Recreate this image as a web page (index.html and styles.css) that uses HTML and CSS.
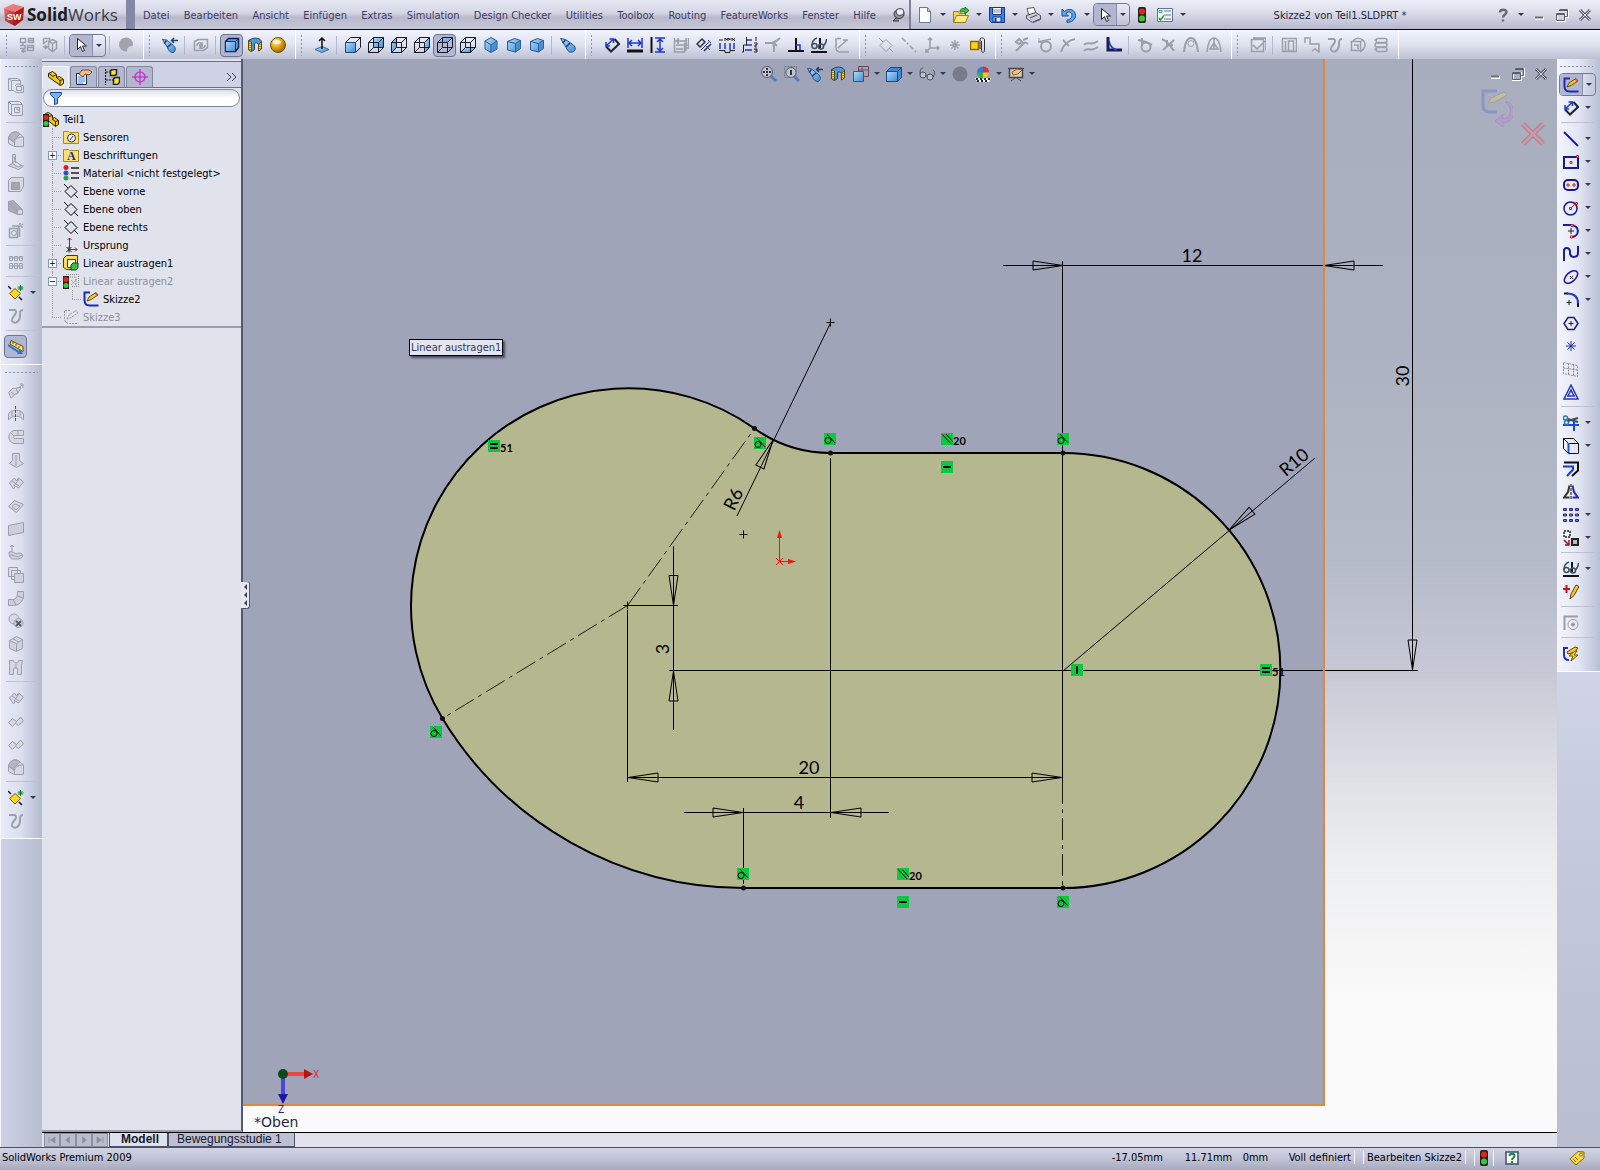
FILE: index.html
```html
<!DOCTYPE html>
<html lang="de">
<head>
  <meta charset="UTF-8" />
  <meta name="viewport" content="width=device-width, initial-scale=1.0"/>
  <title>SolidWorks - Skizze2 von Teil1.SLDPRT</title>
  <link rel="stylesheet" href="styles.css">
</head>
<body>
  <!-- icon symbols -->
  <svg class="sprite" aria-hidden="true">
    <defs>
      <linearGradient id="g-blue" x1="0" y1="0" x2="1" y2="1"><stop offset="0" stop-color="#b4dcfa"/><stop offset="1" stop-color="#3f8ad0"/></linearGradient>
      <linearGradient id="g-red" x1="0" y1="0" x2="1" y2="1"><stop offset="0" stop-color="#f07070"/><stop offset="1" stop-color="#a01018"/></linearGradient>
      <radialGradient id="g-gold" cx=".35" cy=".3" r=".8"><stop offset="0" stop-color="#fff6c0"/><stop offset=".4" stop-color="#e8b020"/><stop offset="1" stop-color="#8a5a00"/></radialGradient>
    </defs>

    <symbol id="boxes" viewBox="0 0 16 16"><path d="M1.500 1.500h5v4h-5zM9.500 1.500h5v4h-5zM8.500 8.500h6v5h-6zM1 8.500h5v3H1M3 14h4M5 12l-2 2 2 2M4 5v3M9 3.500h5M9 10.500h5" stroke-width="1.500"/></symbol>
    <symbol id="boxes2" viewBox="0 0 16 16"><path d="M1.500 1.500h6v4M6.500 4.500l4-2 4 2v7l-4 3-4-3zM6.500 4.500l4 2 4-2M10.500 6.500v8M1 10h4M3 8l2 2-2 2M1.500 1.500v5l4-3" stroke-width="1.500"/></symbol>
    <symbol id="cursor" viewBox="0 0 16 16"><path d="M4.500 1.500v11l3-3 2 5 2-1-2-4.500h4z" fill="#fff" stroke="#222"/></symbol>
    <symbol id="cloudball" viewBox="0 0 16 16"><circle cx="8" cy="7.500" r="7" fill="#a1a3ae" stroke="none"/><path d="M9 15c0-5 2-6 7-6l-2 4z" fill="#d4d6e0" stroke="none"/></symbol>
    <symbol id="brush" viewBox="0 0 16 16"><path d="M.5 1.500l5 1 8 5.500c3 3 2 6-1 7-3 1-5-1-6-4z" fill="url(#g-blue)" stroke="#24508a"/><path d="M5.500 3L2.500 6M10 6l-4 4" stroke="#1d3f70" stroke-width="1.500"/></symbol>
    <symbol id="brushback" viewBox="0 0 16 16"><path d="M.5 2.500l4 .5 7 5.500c3 3 2 6-.5 7-3 0-4.500-2-5.500-5z" fill="url(#g-blue)" stroke="#24508a"/><path d="M4.500 3.500L2 6.500M9 7l-4 3.500" stroke="#1d3f70" stroke-width="1.500"/><path d="M9.500 3.500H16M12 1L9.500 3.500 12 6" stroke="#1d3f80" stroke-width="1.500"/></symbol>
    <symbol id="rebuild" viewBox="0 0 16 16"><path d="M1.500 4.500l4-2h9v8l-4 3h-9zM4 9c0-4 5-4 5-1M12 8c0 4-5 4-5 1M9 5v3H6M7 12V9h3" stroke-width="1.500"/></symbol>
    <symbol id="shaded" viewBox="0 0 16 16"><path d="M1.500 4.500l3-3h10v9l-3 4h-10z" fill="#5aa5ea" stroke="#10204c" stroke-width="1.500"/><path d="M1.500 4.500h10v10h-10z" fill="url(#g-blue)" stroke="#153060"/><path d="M11.500 4.500l3-3" stroke="#153060"/></symbol>
    <symbol id="section" viewBox="0 0 16 16"><path d="M1.500 3.500l4-2c4-1 8 0 9 3v7l-3 2v-6c-1-2-3-2-4-1v6l-3 2-3-2z" fill="#4f96d8" stroke="#1d3c68"/><path d="M1.500 4v9l3 1.500V5zM11.500 7v7l3-2V5z" fill="#ffe030" stroke="#5b4a00"/><path d="M3 6v7M13 7v5" stroke="#333" stroke-dasharray="1 1"/></symbol>
    <symbol id="gold" viewBox="0 0 16 16"><circle cx="8" cy="8" r="7.500" fill="url(#g-gold)" stroke="#7a5200"/><ellipse cx="7" cy="5" rx="4" ry="2" fill="#fff" opacity=".7" stroke="none"/></symbol>
    <symbol id="normal" viewBox="0 0 16 16"><path d="M1 12.500l7-3 7 3-7 3z" fill="url(#g-blue)" stroke="#3a6ca0"/><path d="M8 12V1M5 4l3-3 3 3" stroke="#111" stroke-width="1.500"/></symbol>
    <symbol id="v-wire" viewBox="0 0 16 16"><path d="M.5 5.500h10v10H.5zM5.500.5h10v10h-10zM.5 5.500l5-5M10.500 5.500l5-5M.5 15.500l5-5M10.500 15.500l5-5" stroke="#1a1d28"/></symbol>
    <symbol id="v-front" viewBox="0 0 16 16"><path d="M.5 5.500l5-5h10v10l-5 5" stroke="#1a1d28"/><path d="M.5 5.500h10v10H.5z" fill="url(#g-blue)" stroke="#1d4880"/><path d="M10.500 5.500l5-5" stroke="#1a1d28"/></symbol>
    <symbol id="v-shade" viewBox="0 0 16 16"><path d="M.5 5.500l4-4h11v10l-4 4H.5z" fill="#3f8ad8" stroke="#1d4880"/><path d="M.5 5.500h11v10H.5z" fill="url(#g-blue)" stroke="#1d4880"/><path d="M11.500 5.500l4-4" stroke="#1d4880"/></symbol>
    <symbol id="v-back" viewBox="0 0 16 16"><path d="M5.500.5h10v10h-10z" fill="url(#g-blue)" stroke="none"/><use href="#v-wire"/></symbol>
    <symbol id="v-left" viewBox="0 0 16 16"><path d="M.5 5.500l5-5v10l-5 5z" fill="url(#g-blue)" stroke="none"/><use href="#v-wire"/></symbol>
    <symbol id="v-right" viewBox="0 0 16 16"><path d="M10.500 5.500l5-5v10l-5 5z" fill="url(#g-blue)" stroke="none"/><use href="#v-wire"/></symbol>
    <symbol id="v-top" viewBox="0 0 16 16"><path d="M.5 5.500l5-5h10l-5 5z" fill="url(#g-blue)" stroke="none"/><use href="#v-wire"/></symbol>
    <symbol id="v-bottom" viewBox="0 0 16 16"><path d="M.5 15.500l5-5h10l-5 5z" fill="url(#g-blue)" stroke="none"/><use href="#v-wire"/></symbol>
    <symbol id="iso" viewBox="0 0 16 16"><path d="M8 .5l6 3.500v8l-6 3.500L2 12V4z" fill="url(#g-blue)" stroke="#235a94"/><path d="M2 4l6 4 6-4M8 8v7" stroke="#235a94"/><path d="M8 8l6-4v8l-6 3.500z" fill="#3a80c8" stroke="none" opacity=".6"/></symbol>
    <symbol id="dimetric" viewBox="0 0 16 16"><path d="M1.500 4.500l7-3 6 2v8l-5 3.500-8-2z" fill="url(#g-blue)" stroke="#235a94"/><path d="M1.500 4.500l8 2 5-3M9.500 6.500V15" stroke="#235a94"/><path d="M9.500 6.500l5-3v8l-5 3z" fill="#3a80c8" stroke="none" opacity=".6"/></symbol>

    <symbol id="smartdim" viewBox="0 0 16 16"><path d="M2 9.500l5 5L15 7l-4.500-5" stroke="#1c2238" stroke-width="2"/><path d="M2 9L9 2.500M5.500 2h4v4M2 5v4h4" stroke="#2038d0" stroke-width="1.500"/></symbol>
    <symbol id="hdim" viewBox="0 0 16 16"><path d="M0 14h16" stroke="#111" stroke-width="3"/><path d="M1 1v10M15 1v10M2 6h12M5 3L2 6l3 3M11 3l3 3-3 3" stroke="#2038d0" stroke-width="1.500"/></symbol>
    <symbol id="vdim" viewBox="0 0 16 16"><path d="M1.500 0v16" stroke="#111" stroke-width="2"/><path d="M5 1h10M5 15h10M10 2v12M7 5l3-3 3 3M7 11l3 3 3-3" stroke="#2038d0" stroke-width="1.500"/></symbol>
    <symbol id="baseline" viewBox="0 0 16 16"><path d="M1.500 1v14h10v-4h4V1M3 4h11M3 8h11M5 1v6M13 1v13M3 12h7M6 2l-3 2 3 2M11 6l3 2-3 2" stroke-width="1.500"/></symbol>
    <symbol id="chamferdim" viewBox="0 0 16 16"><path d="M1 7l5-5 3 3-5 5zM8 14l7-7" stroke="#30333f" stroke-width="1.500"/><path d="M5 13l8-8M9 8l5 5M12 3l3 3" stroke="#2a3a90"/></symbol>
    <symbol id="hord" viewBox="0 0 16 16"><path d="M1 12V6M6 12V6M11 13V6M15 12V6" stroke="#2038d0" stroke-width="1.500"/><path d="M0 3h4M6 4V1l2 2V1M9 4V1l2 2V1M13 4V1l3 3V1M0 13.500h6v2h5v-2h5" stroke="#222"/></symbol>
    <symbol id="vord" viewBox="0 0 16 16"><path d="M4 3h6M4 8h6M3 13h7" stroke="#2038d0" stroke-width="1.500"/><path d="M4.500 0v8h-3v7H0M14 0v4M12 6h3v2h-2v2h2M12 12h3v3h-3M13 13h2" stroke="#222"/></symbol>
    <symbol id="scurve" viewBox="0 0 16 16"><path d="M0 6h7c2 0 2 3 2 9M7 6c3-1 6-3 8-5M12 9L9 6" stroke-width="2"/></symbol>
    <symbol id="perp" viewBox="0 0 16 16"><path d="M0 14h16M8 1v12" stroke="#111" stroke-width="2"/><path d="M8 8h4v5" stroke="#2038d0" stroke-width="1.500"/></symbol>
    <symbol id="relations" viewBox="0 0 16 16"><path d="M0 15h16M9 1v10" stroke="#111" stroke-width="2"/><circle cx="3.500" cy="9" r="2.500" stroke="#3c5260" stroke-width="1.500"/><circle cx="10" cy="9.500" r="2.500" stroke="#3c5260" stroke-width="1.500"/><path d="M1 9c0-4 2-7 5-8M12.500 9c2-2 3-4 3-7" stroke="#3c5260" stroke-width="1.500"/></symbol>
    <symbol id="angle" viewBox="0 0 16 16"><path d="M2 1v10c0 3 2 4 5 4h8M4 11l9-8M9 3h5M3 1.500h4" stroke-width="1.500"/></symbol>
    <symbol id="plane" viewBox="0 0 16 16"><path d="M8 2.500l6 6-6 6-6-6zM1 1l4 4M11 11l4 4"/></symbol>
    <symbol id="axis" viewBox="0 0 16 16"><path d="M1 1l14 14" stroke-width="1.500" stroke-dasharray="5 2 2 2"/></symbol>
    <symbol id="csys" viewBox="0 0 16 16"><path d="M6 1v10h9M6 11l-4 4M4 3l2-2 2 2M13 9l2 2-2 2M2 12v3h3" stroke-width="1.500"/></symbol>
    <symbol id="point" viewBox="0 0 16 16"><path d="M8 3v10M3 8h10M4.500 4.500l7 7M11.500 4.500l-7 7" stroke-width="1.500"/></symbol>
    <symbol id="clip" viewBox="0 0 16 16"><path d="M.5 4.500h8v8h-8z" fill="#ffd020" stroke="#8a6800" stroke-width="1.500"/><path d="M10 12V2.500c0-2 4.500-2 4.500 0v11c0 2.500-3 2.500-3 0V4" stroke="#333"/></symbol>
    <symbol id="wrench" viewBox="0 0 16 16"><path d="M2 14L11 5M11 5l3 2M9 3l5-2M2 5l3-3 3 3-3 2z" stroke-width="2"/></symbol>
    <symbol id="circtan" viewBox="0 0 16 16"><path d="M1 5L14 2" stroke-width="1.500"/><circle cx="9" cy="9.500" r="5" stroke-width="2"/><path d="M2 1v4l4 1"/></symbol>
    <symbol id="arcpt" viewBox="0 0 16 16"><path d="M1 15C3 9 6 4 15 2M3 3l6 6" stroke-width="2"/></symbol>
    <symbol id="waves" viewBox="0 0 16 16"><path d="M1 8c4-5 6 2 14-4M1 14c4-5 6 2 14-4" stroke-width="2"/></symbol>
    <symbol id="corner" viewBox="0 0 16 16"><path d="M2 0v13h14" stroke="#15204c" stroke-width="3"/><path d="M3 4c1 5 3 8 8 9" stroke="#2038d0" stroke-width="1.500"/></symbol>
    <symbol id="bug" viewBox="0 0 16 16"><circle cx="9" cy="10" r="4.500" stroke-width="2"/><path d="M1 3l8 2 6 3M5 1v8" stroke-width="2"/></symbol>
    <symbol id="cross" viewBox="0 0 16 16"><path d="M2 2c5 2 8 6 12 12M14 3L3 13M7 3v5h6" stroke-width="2"/></symbol>
    <symbol id="arch" viewBox="0 0 16 16"><path d="M1 15C2 5 5 1 8 1s6 4 7 14" stroke-width="2"/><circle cx="8" cy="6.500" r="3"/></symbol>
    <symbol id="arch2" viewBox="0 0 16 16"><path d="M1 15C2 5 5 1 8 1s6 4 7 14M8 1v12M4 12l4-6 4 6z" stroke-width="1.500"/></symbol>
    <symbol id="sheetcheck" viewBox="0 0 16 16"><path d="M1.500 2.500h12v12h-12zM3 8l4 4 8-8M3 1h13v12" stroke-width="1.500"/></symbol>
    <symbol id="pages" viewBox="0 0 16 16"><path d="M1.500 1.500h14v13h-14zM4.500 4v10M7.500 4h5v10h-5z" stroke-width="1.500"/></symbol>
    <symbol id="zig" viewBox="0 0 16 16"><path d="M1 6V1h5v6h9v8l-4-3-3 2" stroke-width="1.500"/></symbol>
    <symbol id="ess" viewBox="0 0 16 16"><path d="M1 2h6c4 3-5 8-3 11 3 4 8 0 8-5 0-4 0-6 3-6" stroke-width="2"/></symbol>
    <symbol id="wrapbox" viewBox="0 0 16 16"><path d="M1.500 4.500h9v9h-9zM3 4c3-4 8-3 11 0 2 4 1 8-4 11M4 8h4v4M10 5l3-2" stroke-width="1.500"/></symbol>
    <symbol id="coil" viewBox="0 0 16 16"><rect x="3" y="1.500" width="11" height="4" rx="2" stroke-width="1.500"/><rect x="2" y="6" width="12" height="4" rx="2" stroke-width="1.500"/><rect x="3" y="10.500" width="11" height="4" rx="2" stroke-width="1.500"/><path d="M1 3h3M1 12h3"/></symbol>

    <symbol id="new" viewBox="0 0 16 16"><path d="M2.500.5h8l3 4v11h-11z" fill="#fff" stroke="#6c7890"/><path d="M10.500.5v4h3M13 15.500H3" stroke="#6c7890"/></symbol>
    <symbol id="open" viewBox="0 0 16 16"><path d="M.5 4.500h5l1 2h6v9H.5z" fill="#f7d35a" stroke="#a87800"/><path d="M.5 15.500l3-7h12l-3 7z" fill="#ffe88a" stroke="#a87800"/><path d="M7 5c0-3 2-4 5-3V0l4 3.500L12 7V5c-2-1-3 0-5 0z" fill="#3fc040" stroke="#187018"/></symbol>
    <symbol id="save" viewBox="0 0 16 16"><path d="M.5.5h15v15h-13l-2-2z" fill="#3f7fe0" stroke="#123a8c"/><path d="M3.500.5h9v7h-9z" fill="#fff" stroke="#123a8c"/><path d="M4 3h8M4 5h8" stroke="#88a"/><path d="M4 10h8v5H4z" fill="#dde4f2" stroke="#123a8c"/><path d="M6.500 11v4" stroke="#123a8c" stroke-width="2"/></symbol>
    <symbol id="print" viewBox="0 0 16 16"><path d="M2 1.500l7-1 2 6-7 2z" fill="#fff" stroke="#555"/><path d="M1.500 8.500l9-3 5 3v4l-8 3-6-4z" fill="#c9cdd8" stroke="#4a4e5c"/><path d="M5 11l7-3M8 15l7-3" stroke="#4a4e5c"/></symbol>
    <symbol id="undo" viewBox="0 0 16 16"><path d="M1 2v7h6.500L5 6.500c3-3 6.500-1 6 2.500-.4 2.500-3 4-5 4v2.500c4.500 0 8.500-3 8.500-7C14.500 2.500 8 .5 3.500 4.500z" fill="#58a8f0" stroke="#174a98"/></symbol>
    <symbol id="traffic" viewBox="0 0 16 16"><rect x="4" y="0" width="8" height="16" rx="2" fill="#2b2024" stroke="none"/><circle cx="8" cy="4.500" r="3" fill="#e02818" stroke="none"/><circle cx="8" cy="11.500" r="3" fill="#34cc34" stroke="none"/></symbol>
    <symbol id="options" viewBox="0 0 16 16"><path d="M.5 1.500h15v13H.5z" fill="#eef3fb" stroke="#5a76a0"/><path d="M7 4h7M7 8h7M7 12h7" stroke="#6a7a98"/><path d="M2 3.500h3v2H2z" stroke="#50a070"/><path d="M2 11l1.500 2L7 8.500" stroke="#20a030" stroke-width="1.500"/></symbol>
    <symbol id="pin" viewBox="0 0 16 16"><path d="M8 9l-5 5h6" fill="#888c9c" stroke="#333"/><ellipse cx="9" cy="7" rx="5" ry="4.500" fill="#9498a8" stroke="#333"/><ellipse cx="10" cy="5" rx="4" ry="3.500" fill="#eceef5" stroke="#444"/></symbol>
    <symbol id="help" viewBox="0 0 16 16"><path d="M5 5.500C5 2 11.500 2 11.500 5 11.500 7.500 8 7.500 8 10.500M8 12.500v2" stroke="#666a78" stroke-width="2.500"/></symbol>
    <symbol id="min" viewBox="0 0 16 16"><path d="M4 11.500h9" stroke="#fff" stroke-width="3"/><path d="M4 10.500h8" stroke="#6a6d7c" stroke-width="2"/></symbol>
    <symbol id="restore" viewBox="0 0 16 16"><path d="M6 3h8v7h-3M3 7h8v7H3z" stroke="#fff" stroke-width="2"/><path d="M5.500 2.500h8v7h-3M5 3.500h9M2.500 6.500h8v7h-8zM2 7.500h9" stroke="#5a5d6c"/></symbol>
    <symbol id="close" viewBox="0 0 16 16"><path d="M3 3l10 10M13 3L3 13" stroke="#5a5d6c" stroke-width="3"/><path d="M3 3l10 10M13 3L3 13" stroke="#d5d7e0"/></symbol>

    <symbol id="zoomfit" viewBox="0 0 16 16"><path d="M10 10l5 5" stroke="#4a80c8" stroke-width="3"/><circle cx="6" cy="6" r="5.500" fill="#c0c4d2" stroke="#555a6c"/><path d="M6 2v8M2 6h8" stroke="#333" stroke-width="2" stroke-dasharray="2 1"/></symbol>
    <symbol id="zoomarea" viewBox="0 0 16 16"><path d="M10 10l5 5" stroke="#4a80c8" stroke-width="3"/><circle cx="7" cy="6.500" r="5" fill="#c0c4d2" stroke="#555a6c"/><path d="M.5.500h12v11H.5z" stroke="#777b8c" stroke-dasharray="2 1"/><path d="M7 4v5" stroke="#333" stroke-width="2"/></symbol>
    <symbol id="vieworient" viewBox="0 0 16 16"><path d="M5.500.5h10v10h-10zM5.500 4h10M9 .5v10" stroke="#70485a"/><path d="M.5 5.500h10v10H.5z" fill="url(#g-blue)" stroke="#2c5a94"/></symbol>
    <symbol id="glasses" viewBox="0 0 16 16"><circle cx="4" cy="9" r="3" fill="#b8c4d2" stroke="#4a5060"/><circle cx="11" cy="11" r="3" fill="#b8c4d2" stroke="#4a5060"/><path d="M1 8c0-4 1-6 3-6M14 11c2-3 2-6 0-7M7 9l2 1" stroke="#4a5060"/></symbol>
    <symbol id="darkball" viewBox="0 0 16 16"><circle cx="8" cy="8" r="7.500" fill="#787b8a" stroke="none"/></symbol>
    <symbol id="scene" viewBox="0 0 16 16"><path d="M0 12h16l-2 4H2z" fill="#fff" stroke="none"/><path d="M1 13h14M2 15h12" stroke="#222" stroke-width="2" stroke-dasharray="2 2"/><circle cx="8" cy="6.500" r="6" fill="#3a78d8" stroke="none"/><path d="M8 6.500V.5a6 6 0 0 1 6 6z" fill="#e03030" stroke="none"/><path d="M8 6.500H2a6 6 0 0 0 6 6z" fill="#38b048" stroke="none"/><path d="M8 6.500h6a6 6 0 0 1-6 6z" fill="#f0c030" stroke="none"/></symbol>
    <symbol id="screen" viewBox="0 0 16 16"><path d="M1.500 2.500h13v9h-13z" fill="#d8cdb8" stroke="#4a4540" stroke-width="1.500"/><path d="M0 2.500h16M3 15l4-3M13 15l-4-3" stroke="#4a4540"/><path d="M4 6l5-3 5 1-4 4-5 1z" fill="#f0c088" stroke="#8a6030"/></symbol>

    <symbol id="part" viewBox="0 0 16 16"><path d="M.5 3.500l4-2 4 3v3l3-1 4 3v4l-3 2L.5 7z" fill="#f0c818" stroke="#2c2200"/><path d="M1 3.500l4 3 3-2M8.500 7.500l3.500 3 3-1M12 10.500v5" stroke="#2c2200"/></symbol>
    <symbol id="props" viewBox="0 0 16 16"><path d="M.5 4.500h10v11H.5z" fill="#eaf4ff" stroke="#1d2c50"/><path d="M2 8h7M2 10h7M2 12h7M2 14h5" stroke="#4a90d8"/><path d="M3 5l3-4h7l3 2-3 3-4-1-2 3z" fill="#f0c090" stroke="#7a4c20"/></symbol>
    <symbol id="config" viewBox="0 0 16 16"><path d="M1.500 0v16M2 3h5M2 11h7" stroke="#111" stroke-dasharray="2 1"/><path d="M6.500 1.500l2-1h4v5l-2 1h-4zM9.500 9.500l2-1h4v5l-2 2h-4z" fill="#f7e030" stroke="#222" stroke-width="1.500"/></symbol>
    <symbol id="target" viewBox="0 0 16 16"><circle cx="8" cy="8" r="5" stroke="#c040c8" stroke-width="1.500"/><path d="M8 0v16M0 8h16" stroke="#c040c8" stroke-width="1.500"/></symbol>
    <symbol id="chev" viewBox="0 0 16 16"><path d="M4 4l4 4-4 4M9 4l4 4-4 4" stroke="#3c4050"/></symbol>
    <symbol id="funnel" viewBox="0 0 16 16"><path d="M2.500 2.500h11v2l-4 4v5l-3 1v-6l-4-4z" fill="#6ab8f8" stroke="#1c3f90"/></symbol>
    <symbol id="t-part" viewBox="0 0 16 16"><path d="M2.500 2.500l3-1 4 3v3l2-1 4 3v4l-3 2-10-8z" fill="#f0c818" stroke="#2c2200"/><path d="M3 3l3 2.500 3-1M9 8l3.500 2.500 3-1M12.500 10.500v5" stroke="#2c2200"/><rect x="0" y="3" width="6" height="13" fill="#2b2024" stroke="none"/><circle cx="3" cy="6.500" r="2.500" fill="#e02818" stroke="none"/><circle cx="3" cy="12.500" r="2.500" fill="#34cc34" stroke="none"/></symbol>
    <symbol id="t-sensor" viewBox="0 0 16 16"><path d="M.5 2.500h5l1 1h9v11H.5z" fill="#fbe07a" stroke="#a88820"/><circle cx="8.500" cy="9" r="4" fill="#eaf2ff" stroke="#335"/><path d="M7 11l3-4" stroke="#335"/></symbol>
    <symbol id="t-annot" viewBox="0 0 16 16"><path d="M.5 2.500h5l1 1h9v11H.5z" fill="#fbe07a" stroke="#a88820"/><text x="4" y="13" class="annot-letter">A</text></symbol>
    <symbol id="t-material" viewBox="0 0 16 16"><path d="M8 3h8M8 8h8M8 13h8" stroke="#222" stroke-width="1.500"/><circle cx="3" cy="2.500" r="2.500" fill="#d02030" stroke="none"/><circle cx="3" cy="8" r="2.500" fill="#3050c0" stroke="none"/><circle cx="3" cy="13" r="2.500" fill="#30a050" stroke="none"/></symbol>
    <symbol id="t-origin" viewBox="0 0 16 16"><path d="M6.500 1v10M7 12.500h7M4.500 3l2-2 2 2M12 10.500l2 2-2 2" stroke="#b01828"/><path d="M3.500 10l5 5M8.500 10l-5 5M6 9.500v6" stroke="#222"/></symbol>
    <symbol id="t-extrude" viewBox="0 0 16 16"><path d="M.5 3.500l3-3h11v9l-4 5h-7l-3-2z" fill="#f7dc60" stroke="#4a3a00"/><path d="M4.500 4.500h8v8h-8z" fill="#fff6c8" stroke="#4a3a00"/><path d="M8 10l2-2h5v5l-2 2H8z" fill="#40b850" stroke="#0e4c18"/></symbol>
    <symbol id="t-extrude-off" viewBox="0 0 16 16"><path d="M3 1.500h12.500v12H8M5 4h8v8M8 7l6 6M8 12l6-6" stroke="#888" stroke-dasharray="1 1"/><rect x="0" y="3" width="6" height="13" fill="#2b2024" stroke="none"/><circle cx="3" cy="6.500" r="2.500" fill="#e02818" stroke="none"/><circle cx="3" cy="12.500" r="2.500" fill="#34cc34" stroke="none"/></symbol>
    <symbol id="sketch" viewBox="0 0 16 16"><path d="M7 1.500H1.500V9c0 4 2 5.500 5 5.500h9" stroke="#1a2cb8" stroke-width="2"/><path d="M4 10l2-4 7-4.500 2 2.500-7 4.500z" fill="#f7c830" stroke="#6a4c08"/><path d="M12.500 2l2 2.500" stroke="#d05050" stroke-width="2"/></symbol>
    <symbol id="t-sketch-off" viewBox="0 0 16 16"><path d="M7 1.500H1.500V9c0 4 2 5.500 5 5.500h9M4 10l2-4 7-4.500 2 2.500-7 4.500z" stroke="#999" stroke-dasharray="2 1"/></symbol>

    <symbol id="s-box" viewBox="0 0 16 16"><path d="M.5 1.500h9l3 2v5h3v7h-7l-3-2h-5zM.5 1.500l3 2h9M3.500 3.500v10M7 9l2-2h4M8.500 9.500h5v4h-5z"/></symbol>
    <symbol id="s-cut" viewBox="0 0 16 16"><path d="M.5 1.500h11l3 3v11h-11l-3-3zM.5 1.500l3 3h11M3.500 4.500v11M6.500 7.500h5v5h-5zM8 9h2v2"/></symbol>
    <symbol id="s-fillet" viewBox="0 0 16 16"><path d="M.5 7C2 1 8-1 12 3l3.500 3v9.500h-9l-6-3z" fill="#d6d8e2"/><path d="M.5 7C2 1 8-1 12 3L9 6c-2 1-3 3-3 5z" fill="#b4b7c3"/><path d="M6.500 15.500V12c0-4 3-6 9-6M.5 7l6 5"/></symbol>
    <symbol id="s-rib" viewBox="0 0 16 16"><path d="M4.500.5h3v7l6 4 2 .5-5 3.500-10-4 4-2zM7.500 7L4 9l6 4 4-2M6 3l2 6" fill="#d0d2dc"/></symbol>
    <symbol id="s-shell" viewBox="0 0 16 16"><path d="M.5 3.500l3-3h12v9l-3 5H.5z" fill="#d6d8e2"/><path d="M3.500 5.500h8v7h-8z" fill="#a3a6b2"/></symbol>
    <symbol id="s-draft" viewBox="0 0 16 16"><path d="M.5 1.500l5-1 9 9v5h-5l-9-4z" fill="#a9acb8"/><path d="M9.500 9.500h5v5h-5z" fill="#d6d8e2"/><path d="M.5 3l9 8"/></symbol>
    <symbol id="s-hole" viewBox="0 0 16 16"><path d="M1.500 5.500h8v9h-8zM4 3h7M11.500 5v9M10 5l3-3M14 1l1 1M12 0v2M15 4h-2" stroke-width="1.500"/><circle cx="6" cy="10" r="2.500"/></symbol>
    <symbol id="s-pattern" viewBox="0 0 16 16"><path d="M1.500 2.500h3v4h-3zM6.500 2.500h3v4h-3zM11.500 2.500h3v4h-3zM1.500 9.500h3v5h-3zM6.500 9.500h3v5h-3zM11.500 9.500h3v5h-3zM1 4h14M1 12h14"/></symbol>
    <symbol id="refgeo" viewBox="0 0 16 16"><path d="M0 1l3 3M11 12l3 3" stroke="#111" stroke-width="1.500"/><path d="M7 3.500l5.500 5-5.500 5.500L1.500 8.500z" fill="#ffd820" stroke="#7c5c00"/><path d="M12.500 0v6M9.500 3h6M10.500 1l4 4M14.500 1l-4 4" stroke="#108020"/></symbol>
    <symbol id="measure" viewBox="0 0 16 16"><path d="M3 1.500l12 6v5L2 5z" fill="#f7e27a" stroke="#5a4c10"/><path d="M5 3v2M8 5v2M11 7v2" stroke="#5a4c10"/><path d="M0 6l12 8" stroke="#1c7ad0" stroke-width="2"/><path d="M9 15h6l-3-5z" fill="#1c7ad0" stroke="none"/></symbol>
    <symbol id="s-surf" viewBox="0 0 16 16"><path d="M.5 9.500L5 5c2 2 5-2 8 0l-4 6c-3-1-4 4-6 4zM3 9l4 3M8 5l2 5M10 5l4-3M12 1h3v4" fill="#d4d6e0"/></symbol>
    <symbol id="s-surf2" viewBox="0 0 16 16"><path d="M1.500 8l5-5 2 3 2-3 5 4-5 6-3-2-2 3zM4 6l7 5M11 4L6 11" fill="#d4d6e0"/></symbol>
    <symbol id="s-surf3" viewBox="0 0 16 16"><path d="M.5 9.500l4-4 4 3 4-4.500 3 4-5 4.500-3-2-3 3zM8.500 8.500l-1 2" fill="#d4d6e0"/></symbol>
    <symbol id="s-revolve" viewBox="0 0 16 16"><path d="M.5 14V8c2-5 13-5 15 0v6c-3-5-12-5-15 0zM4 5v5M12 5v5" fill="#d4d6e0"/><path d="M7.500 0v16" stroke="#555" stroke-dasharray="3 1"/></symbol>
    <symbol id="s-sweep" viewBox="0 0 16 16"><path d="M15.500 1.500H6c-7 2-7 11 0 13h9.500v-5H7c-2-1-2-2 0-3h8.500zM3 4l3 3M10 1.500v5" fill="#d4d6e0"/></symbol>
    <symbol id="s-loft" viewBox="0 0 16 16"><path d="M4.500 1.500h7v7l4 3-7 4-7-4 3-3zM8 3v11" fill="#d4d6e0"/></symbol>
    <symbol id="s-offset" viewBox="0 0 16 16"><path d="M.5 8.500l6-6 9 4-7 8zM4 8.500L7 6l5 2-4 4z" fill="#d4d6e0"/></symbol>
    <symbol id="s-planar" viewBox="0 0 16 16"><path d="M.5 4.500l15-3v10l-15 3z" fill="#cdd0da"/></symbol>
    <symbol id="s-thick" viewBox="0 0 16 16"><path d="M4 8V1M2 3l2-2 2 2M1 8c6-1 5 3 10 1 5 0 5 5 0 6H5c-3 0-4-3-4-7zM2 11c5 0 6 3 12 0" fill="#cdd0da"/></symbol>
    <symbol id="s-stack" viewBox="0 0 16 16"><path d="M.5.5h9v9h-9zM3.500 3.500h9v9h-9z" fill="#dcdee8"/><path d="M6.500 6.500h9v9h-9z" fill="#cfd1dc"/></symbol>
    <symbol id="s-bend" viewBox="0 0 16 16"><path d="M9.500 1.500h6v6c-2 6-6 8-10 8h-5v-6h4c4 0 5-3 5-8zM10 6l5 2M5 9l3 6" fill="#cdd0da"/></symbol>
    <symbol id="s-delete" viewBox="0 0 16 16"><circle cx="6" cy="6" r="5" fill="#d9dbe4"/><circle cx="10.500" cy="10" r="4.500" fill="#d0d2dc"/><path d="M8 8l5 5M13 8l-5 5" stroke="#555a66" stroke-width="2"/></symbol>
    <symbol id="s-cube" viewBox="0 0 16 16"><path d="M1.500 4.500l7-4 6 3v9l-6 3-7-3zM1.500 4.500l7 3 6-4M8.500 7.500v8M5 3l6 3" fill="#cfd1dc"/></symbol>
    <symbol id="s-knit" viewBox="0 0 16 16"><path d="M1.500 1.500h4c0 3 5 3 5 0h4l-1 5v9h-4v-6c-1-1-3-1-4 0v6h-4v-9z" fill="#d4d6e0"/><path d="M8 5v5"/></symbol>

    <symbol id="line" viewBox="0 0 16 16"><path d="M1 1l14 14" stroke="#1a1ab0" stroke-width="2"/></symbol>
    <symbol id="rect" viewBox="0 0 16 16"><path d="M1 3h14v11H1z" stroke="#1a1a90" stroke-width="2"/><path d="M7 7.500h2v2H7zM13.500 1.500h2v2h-2z" fill="#fff" stroke="#c02020"/></symbol>
    <symbol id="slot" viewBox="0 0 16 16"><rect x="1" y="3" width="14" height="10" rx="4" stroke="#1a1a90" stroke-width="2"/><path d="M4 7h2v2H4zM10 7h2v2h-2z" fill="#fff" stroke="#c02020"/></symbol>
    <symbol id="circle" viewBox="0 0 16 16"><circle cx="7.500" cy="8.500" r="6.500" stroke="#1a1a90" stroke-width="1.500"/><path d="M7 9l6-6" stroke="#c02020"/><path d="M6.500 7.500h2v2h-2zM12.500 2.500h2v2h-2z" fill="#fff" stroke="#c02020"/></symbol>
    <symbol id="arc" viewBox="0 0 16 16"><path d="M0 2h8c9 1 9 11 1 12" stroke="#1a1ab0" stroke-width="2"/><path d="M8 5v6M5 8h6" stroke="#222"/><path d="M8 1.500h2v2H8zM7.500 13h2v2h-2z" fill="#fff" stroke="#c02020"/></symbol>
    <symbol id="spline" viewBox="0 0 16 16"><path d="M1 15V5c0-4 5-4 6 0v3c1 4 8 4 8-1V0" stroke="#1a1ab0" stroke-width="2"/></symbol>
    <symbol id="ellipse" viewBox="0 0 16 16"><ellipse cx="8" cy="8" rx="8" ry="4.500" transform="rotate(-42 8 8)" stroke="#1a1a90" stroke-width="1.500"/><path d="M7 7l3 3M10 7l-3 3" stroke="#222"/></symbol>
    <symbol id="fillet" viewBox="0 0 16 16"><path d="M1 1.500h4M15 11v4" stroke="#111" stroke-width="2"/><path d="M4 1.500c8 0 11 4 11 10" stroke="#2038d0" stroke-width="2"/><path d="M6 8v5M3.500 10.500h5" stroke="#222"/></symbol>
    <symbol id="polygon" viewBox="0 0 16 16"><path d="M5 2.500h6l4 6-4 6H5l-4-6z" stroke="#1a1a90" stroke-width="1.500"/><path d="M8 6v5M5.500 8.500h5" stroke="#222"/></symbol>
    <symbol id="star" viewBox="0 0 16 16"><path d="M8 3v10M3 8h10M4.500 4.500l7 7M11.500 4.500l-7 7" stroke="#1a2cb8"/></symbol>
    <symbol id="skplane" viewBox="0 0 16 16"><path d="M.5 1.500l14 3v11l-14-3zM5.500 2.500v11M10.500 3.500v11M.5 7l14 2" stroke="#888a94" stroke-dasharray="2 1"/></symbol>
    <symbol id="text" viewBox="0 0 16 16"><path d="M8 1L1 15h14zM8 6l-3 6h6zM4 12h8" stroke="#2a38c0" stroke-width="1.500"/></symbol>
    <symbol id="trim" viewBox="0 0 16 16"><path d="M0 10h16M11 5v11" stroke="#1848e0" stroke-width="2"/><circle cx="2.500" cy="3" r="2" stroke="#2878c0" stroke-width="1.500"/><circle cx="3.500" cy="7.500" r="2" stroke="#2878c0" stroke-width="1.500"/><path d="M5 4l10 3M5 6l10-3" stroke="#444a58" stroke-width="2"/></symbol>
    <symbol id="convert" viewBox="0 0 16 16"><path d="M5.500 5.500h10v10h-10zM.5.5h10l5 5M.5.5l5 5M.5.500v10l5 5" stroke="#111"/><path d="M5.500 5v10" stroke="#2050e0" stroke-width="2"/></symbol>
    <symbol id="offset" viewBox="0 0 16 16"><path d="M1 1.500h14v8L9 15" stroke="#111" stroke-width="2"/><path d="M0 5.500h10v3L4 15" stroke="#2038d0" stroke-width="2"/></symbol>
    <symbol id="mirror" viewBox="0 0 16 16"><path d="M6.500 1.500L5 8l-4 5.500h5.500" stroke="#333" stroke-width="2"/><path d="M9.500 1.500L11 8l4 5.500H9.500" stroke="#2a2ab0" stroke-width="2"/><path d="M8 0v16" stroke="#111" stroke-dasharray="3 1"/></symbol>
    <symbol id="lpattern" viewBox="0 0 16 16"><path d="M.5 1.500h3v2h-3zM6.500 1.500h3v2h-3zM12.500 1.500h3v2h-3zM.5 7h3v2h-3zM6.500 7h3v2h-3zM12.500 7h3v2h-3zM.5 12.500h3v2h-3zM6.500 12.500h3v2h-3zM12.500 12.500h3v2h-3z" fill="#7080d8" stroke="#202890"/></symbol>
    <symbol id="move" viewBox="0 0 16 16"><path d="M1 1h6v6H1z" stroke="#222" stroke-width="1.500" stroke-dasharray="2 1"/><path d="M9 9h6v6H9z" stroke="#222" stroke-width="2" fill="#b8bac4"/><path d="M1 10l5 5M6 10v5H2" stroke="#a01020" stroke-width="1.500"/></symbol>
    <symbol id="repair" viewBox="0 0 16 16"><path d="M0 5h7M3.500 1v8" stroke="#d01010" stroke-width="2"/><path d="M7 15l1-5 5-9 3 1.500-5 9z" fill="#f7c830" stroke="#5a4008"/></symbol>
    <symbol id="quick" viewBox="0 0 16 16"><path d="M15 1.500H1.500V15" stroke-width="2"/><circle cx="10" cy="9.500" r="5"/><circle cx="10" cy="9.500" r="1.500" fill="#888"/></symbol>
    <symbol id="rapid" viewBox="0 0 16 16"><path d="M5 2H1v7c0 4 2 5 5 5" stroke="#2030c8" stroke-width="2"/><path d="M4 6l8-5 3 1-3 4-7 2z" fill="#f7c830" stroke="#5a4008"/><path d="M12 5L6 10h4l-2 5 7-6h-4l3-4z" fill="#ffe030" stroke="#6a5000"/></symbol>
    <symbol id="tag" viewBox="0 0 16 16"><path d="M1 9l8-7.500 6 .5v6L7 15z" fill="#ffd840" stroke="#8a6400"/><circle cx="12" cy="4.500" r="1.500" fill="#fff" stroke="#8a6400"/><path d="M4 9l3 3M6 7l3 3" stroke="#8a6400"/></symbol>
    <symbol id="qbox" viewBox="0 0 16 16"><path d="M2 2h12v12H2z" fill="#fff" stroke="#305070" stroke-width="1.500"/><path d="M5.500 6C5.500 3 10.500 3 10.500 6 10.500 8 8 8 8 10M8 11v2" stroke="#109030" stroke-width="2"/></symbol>
    <symbol id="n-first" viewBox="0 0 16 16"><path d="M4 4v8M12 4v8L6 8z" fill="currentColor"/></symbol>
    <symbol id="n-prev" viewBox="0 0 16 16"><path d="M10 4v8L5 8z" fill="currentColor"/></symbol>
    <symbol id="n-next" viewBox="0 0 16 16"><path d="M6 4v8l5-4z" fill="currentColor"/></symbol>
    <symbol id="n-last" viewBox="0 0 16 16"><path d="M12 4v8M4 4v8l6-4z" fill="currentColor"/></symbol>
  </svg>

  <header class="titlebar">
    <div class="menu-area">
      <div class="brand">
        <svg class="cube" viewBox="0 0 22 24">
          <path d="M1 5l9-4 11 3-9 5z" fill="#f07a78"/>
          <path d="M1 5l11 4v14L2 18z" fill="url(#g-red)"/>
          <path d="M12 9l9-5-1 13-8 6z" fill="#b01820"/>
          <text x="4" y="17" class="cube-letter">SW</text>
        </svg>
        <span class="brand-name"><b>Solid</b>Works</span>
      </div>
      <nav class="menu">
        <a href="#">Datei</a>
        <a href="#">Bearbeiten</a>
        <a href="#">Ansicht</a>
        <a href="#">Einfügen</a>
        <a href="#">Extras</a>
        <a href="#">Simulation</a>
        <a href="#">Design Checker</a>
        <a href="#">Utilities</a>
        <a href="#">Toolbox</a>
        <a href="#">Routing</a>
        <a href="#">FeatureWorks</a>
        <a href="#">Fenster</a>
        <a href="#">Hilfe</a>
      </nav>
      <button class="btn pin" aria-label="Anheften"><svg><use href="#pin"/></svg></button>
    </div>
    <div class="standard">
      <button class="btn" aria-label="Neu"><svg><use href="#new"/></svg></button><button class="drop" aria-label="Neu Optionen"></button>
      <button class="btn" aria-label="Öffnen"><svg><use href="#open"/></svg></button><button class="drop" aria-label="Öffnen Optionen"></button>
      <button class="btn" aria-label="Speichern"><svg><use href="#save"/></svg></button><button class="drop" aria-label="Speichern Optionen"></button>
      <button class="btn" aria-label="Drucken"><svg><use href="#print"/></svg></button><button class="drop" aria-label="Drucken Optionen"></button>
      <button class="btn" aria-label="Rückgängig"><svg><use href="#undo"/></svg></button><button class="drop" aria-label="Rückgängig Optionen"></button>
      <span class="split"><button class="btn" aria-label="Auswählen"><svg><use href="#cursor"/></svg></button><button class="drop" aria-label="Auswahl Optionen"></button></span>
      <button class="btn" aria-label="Modellneuaufbau"><svg><use href="#traffic"/></svg></button>
      <button class="btn" aria-label="Optionen"><svg><use href="#options"/></svg></button><button class="drop" aria-label="Weitere Optionen"></button>
    </div>
    <div class="doc-title">Skizze2 von Teil1.SLDPRT *</div>
    <div class="window-buttons">
      <button class="btn" aria-label="Hilfe"><svg><use href="#help"/></svg></button><button class="drop" aria-label="Hilfe Optionen"></button>
      <button class="btn" aria-label="Minimieren"><svg><use href="#min"/></svg></button>
      <button class="btn" aria-label="Wiederherstellen"><svg><use href="#restore"/></svg></button>
      <button class="btn" aria-label="Schließen"><svg><use href="#close"/></svg></button>
    </div>
  </header>

  <div class="toolbars">
    <div class="bar">
      <button class="btn" disabled><svg><use href="#boxes"/></svg></button>
      <button class="btn" disabled><svg><use href="#boxes2"/></svg></button>
      <i class="sep"></i>
      <span class="split"><button class="btn"><svg><use href="#cursor"/></svg></button><button class="drop"></button></span>
      <i class="sep"></i>
      <button class="btn" disabled><svg><use href="#cloudball"/></svg></button>
    </div>
    <div class="bar">
      <button class="btn"><svg><use href="#brushback"/></svg></button>
      <i class="sep"></i>
      <button class="btn" disabled><svg><use href="#rebuild"/></svg></button>
      <i class="sep"></i>
      <button class="btn pressed"><svg><use href="#shaded"/></svg></button>
      <button class="btn"><svg><use href="#section"/></svg></button>
      <button class="btn"><svg><use href="#gold"/></svg></button>
    </div>
    <div class="bar">
      <button class="btn"><svg><use href="#normal"/></svg></button>
      <i class="sep"></i>
      <button class="btn"><svg><use href="#v-front"/></svg></button>
      <button class="btn"><svg><use href="#v-back"/></svg></button>
      <button class="btn"><svg><use href="#v-left"/></svg></button>
      <button class="btn"><svg><use href="#v-right"/></svg></button>
      <button class="btn pressed"><svg><use href="#v-top"/></svg></button>
      <button class="btn"><svg><use href="#v-bottom"/></svg></button>
      <button class="btn"><svg><use href="#iso"/></svg></button>
      <button class="btn"><svg><use href="#dimetric"/></svg></button>
      <button class="btn"><svg><use href="#dimetric"/></svg></button>
      <i class="sep"></i>
      <button class="btn"><svg><use href="#brush"/></svg></button>
    </div>
    <div class="bar">
      <button class="btn"><svg><use href="#smartdim"/></svg></button>
      <button class="btn"><svg><use href="#hdim"/></svg></button>
      <button class="btn"><svg><use href="#vdim"/></svg></button>
      <button class="btn" disabled><svg><use href="#baseline"/></svg></button>
      <button class="btn"><svg><use href="#chamferdim"/></svg></button>
      <button class="btn"><svg><use href="#hord"/></svg></button>
      <button class="btn"><svg><use href="#vord"/></svg></button>
      <button class="btn" disabled><svg><use href="#scurve"/></svg></button>
      <button class="btn"><svg><use href="#perp"/></svg></button>
      <button class="btn"><svg><use href="#relations"/></svg></button>
      <button class="btn" disabled><svg><use href="#angle"/></svg></button>
    </div>
    <div class="bar">
      <button class="btn" disabled><svg><use href="#plane"/></svg></button>
      <button class="btn" disabled><svg><use href="#axis"/></svg></button>
      <button class="btn" disabled><svg><use href="#csys"/></svg></button>
      <button class="btn" disabled><svg><use href="#point"/></svg></button>
      <button class="btn"><svg><use href="#clip"/></svg></button>
    </div>
    <div class="bar">
      <button class="btn" disabled><svg><use href="#wrench"/></svg></button>
      <button class="btn" disabled><svg><use href="#circtan"/></svg></button>
      <button class="btn" disabled><svg><use href="#arcpt"/></svg></button>
      <button class="btn" disabled><svg><use href="#waves"/></svg></button>
      <button class="btn"><svg><use href="#corner"/></svg></button>
      <i class="sep"></i>
      <button class="btn" disabled><svg><use href="#bug"/></svg></button>
      <button class="btn" disabled><svg><use href="#cross"/></svg></button>
      <button class="btn" disabled><svg><use href="#arch"/></svg></button>
      <button class="btn" disabled><svg><use href="#arch2"/></svg></button>
    </div>
    <div class="bar">
      <button class="btn" disabled><svg><use href="#sheetcheck"/></svg></button>
      <i class="sep"></i>
      <button class="btn" disabled><svg><use href="#pages"/></svg></button>
      <button class="btn" disabled><svg><use href="#zig"/></svg></button>
      <button class="btn" disabled><svg><use href="#ess"/></svg></button>
      <button class="btn" disabled><svg><use href="#wrapbox"/></svg></button>
      <button class="btn" disabled><svg><use href="#coil"/></svg></button>
    </div>
  </div>

  <main class="workspace">
    <aside class="side side-left">
      <div class="vbar">
        <button class="btn" disabled><svg><use href="#s-box"/></svg></button>
        <button class="btn" disabled><svg><use href="#s-cut"/></svg></button>
        <i class="vsep"></i>
        <button class="btn" disabled><svg><use href="#s-fillet"/></svg></button>
        <button class="btn" disabled><svg><use href="#s-rib"/></svg></button>
        <button class="btn" disabled><svg><use href="#s-shell"/></svg></button>
        <button class="btn" disabled><svg><use href="#s-draft"/></svg></button>
        <button class="btn" disabled><svg><use href="#s-hole"/></svg></button>
        <i class="vsep"></i>
        <button class="btn" disabled><svg><use href="#s-pattern"/></svg></button>
        <i class="vsep"></i>
        <span class="pair"><button class="btn"><svg><use href="#refgeo"/></svg></button><button class="drop"></button></span>
        <button class="btn" disabled><svg><use href="#ess"/></svg></button>
        <i class="vsep"></i>
        <button class="btn pressed"><svg><use href="#measure"/></svg></button>
      </div>
      <div class="vbar">
        <button class="btn" disabled><svg><use href="#s-surf"/></svg></button>
        <button class="btn" disabled><svg><use href="#s-revolve"/></svg></button>
        <button class="btn" disabled><svg><use href="#s-sweep"/></svg></button>
        <button class="btn" disabled><svg><use href="#s-loft"/></svg></button>
        <button class="btn" disabled><svg><use href="#s-surf2"/></svg></button>
        <button class="btn" disabled><svg><use href="#s-offset"/></svg></button>
        <button class="btn" disabled><svg><use href="#s-planar"/></svg></button>
        <button class="btn" disabled><svg><use href="#s-thick"/></svg></button>
        <button class="btn" disabled><svg><use href="#s-stack"/></svg></button>
        <button class="btn" disabled><svg><use href="#s-bend"/></svg></button>
        <button class="btn" disabled><svg><use href="#s-delete"/></svg></button>
        <button class="btn" disabled><svg><use href="#s-cube"/></svg></button>
        <button class="btn" disabled><svg><use href="#s-knit"/></svg></button>
        <i class="vsep"></i>
        <button class="btn" disabled><svg><use href="#s-surf2"/></svg></button>
        <button class="btn" disabled><svg><use href="#s-surf3"/></svg></button>
        <button class="btn" disabled><svg><use href="#s-surf3"/></svg></button>
        <button class="btn" disabled><svg><use href="#s-fillet"/></svg></button>
        <i class="vsep"></i>
        <span class="pair"><button class="btn"><svg><use href="#refgeo"/></svg></button><button class="drop"></button></span>
        <button class="btn" disabled><svg><use href="#ess"/></svg></button>
      </div>
    </aside>

    <section class="center">
      <div class="split-view">
        <div class="panel">
          <div class="panel-tabs">
            <button class="tab active" aria-label="FeatureManager"><svg><use href="#part"/></svg></button>
            <button class="tab" aria-label="PropertyManager"><svg><use href="#props"/></svg></button>
            <button class="tab" aria-label="ConfigurationManager"><svg><use href="#config"/></svg></button>
            <button class="tab" aria-label="DimXpertManager"><svg><use href="#target"/></svg></button>
            <button class="more" aria-label="Mehr"><svg><use href="#chev"/></svg></button>
          </div>
          <label class="filter"><svg><use href="#funnel"/></svg><input type="text" aria-label="Filter"></label>
          <div class="tree">
            <div class="row root"><svg><use href="#t-part"/></svg>Teil1</div>
            <ul>
              <li><div class="row"><svg><use href="#t-sensor"/></svg>Sensoren</div></li>
              <li><button class="expander" aria-label="Erweitern">+</button><div class="row"><svg><use href="#t-annot"/></svg>Beschriftungen</div></li>
              <li><div class="row"><svg><use href="#t-material"/></svg>Material &lt;nicht festgelegt&gt;</div></li>
              <li><div class="row"><svg><use href="#plane"/></svg>Ebene vorne</div></li>
              <li><div class="row"><svg><use href="#plane"/></svg>Ebene oben</div></li>
              <li><div class="row"><svg><use href="#plane"/></svg>Ebene rechts</div></li>
              <li><div class="row"><svg><use href="#t-origin"/></svg>Ursprung</div></li>
              <li><button class="expander" aria-label="Erweitern">+</button><div class="row"><svg><use href="#t-extrude"/></svg>Linear austragen1</div></li>
              <li>
                <button class="expander" aria-label="Reduzieren">−</button><div class="row muted"><svg><use href="#t-extrude-off"/></svg>Linear austragen2</div>
                <ul>
                  <li><div class="row"><svg><use href="#sketch"/></svg>Skizze2</div></li>
                </ul>
              </li>
              <li><div class="row muted"><svg><use href="#t-sketch-off"/></svg>Skizze3</div></li>
            </ul>
          </div>
          <button class="handle" aria-label="Panel einklappen"><i></i><i></i><i></i></button>
        </div>

        <div class="viewport">
          <svg class="drawing">
            <defs>
              <path id="arrow" d="M0 0L30-4.500V4.500z"/>
              <g id="tangent"><rect class="rel" x="-6" y="-6" width="12" height="12"/><circle cx="-2" cy="1.500" r="3"/><path d="M-3-5L5 4"/></g>
              <g id="parallel"><rect class="rel" x="-6" y="-6" width="12" height="12"/><path d="M-5-5L4 5M-1-5L6 3"/></g>
              <g id="horizontal"><rect class="rel" x="-6" y="-6" width="12" height="12"/><path d="M-4 0h8" stroke-width="2"/></g>
              <g id="vertical"><rect class="rel" x="-6" y="-6" width="12" height="12"/><path d="M0-4v8" stroke-width="2"/></g>
              <g id="equal"><rect class="rel" x="-6" y="-6" width="12" height="12"/><path d="M-4-2h8M-4 2h8" stroke-width="2"/></g>
              <path id="mark" d="M-4 0h8M0-4v8"/>
            </defs>
            <!-- sketch space starts at the viewport's top left corner (243, 59) -->
            <g transform="translate(-243 -59)">
              <rect class="face" x="200" y="20" width="1124" height="1085"/>
              <path class="region" d="M442.500 718.500A217.500 217.500 0 0 1 754.500 428.500A130.500 130.500 0 0 0 830.500 453H1063A217.500 217.500 0 0 1 1063 888H743.500A353 353 0 0 1 442.500 718.500z"/>
              <g class="centerline">
                <path d="M627.500 605.500L754.500 428.500M627.500 605.500L442.500 718.500M1062.500 782V888"/>
              </g>
              <g class="dims">
                <path d="M1003 265.500H1383M1062.500 261V782M830.500 323L737 516M627.500 610V782M830.500 458V818M743.500 808V884M627.500 605.500H678M669 670.500H1418M673.500 546V730M628 777.500H1062M684 812.500H889M1063 671L1315 458M1412.500 20V670"/>
                <use href="#arrow" transform="translate(1063 265.500) rotate(180)"/>
                <use href="#arrow" transform="translate(1324 265.500)"/>
                <use href="#arrow" transform="translate(773 440) rotate(116)"/>
                <use href="#arrow" transform="translate(1229 530) rotate(-40)"/>
                <use href="#arrow" transform="translate(673.500 605.500) rotate(-90)"/>
                <use href="#arrow" transform="translate(673.500 671) rotate(90)"/>
                <use href="#arrow" transform="translate(628 777.500)"/>
                <use href="#arrow" transform="translate(1062 777.500) rotate(180)"/>
                <use href="#arrow" transform="translate(743 812.500) rotate(180)"/>
                <use href="#arrow" transform="translate(831 812.500)"/>
                <use href="#arrow" transform="translate(1412.500 670) rotate(-90)"/>
                <use href="#mark" x="830.500" y="322.500"/>
                <use href="#mark" x="743.500" y="534.500"/>
                <use href="#mark" x="627.500" y="605.500"/>
                <use href="#mark" x="1062.500" y="670.500"/>
              </g>
              <g class="dim-text">
                <text x="1192" y="262">12</text>
                <text x="809" y="774">20</text>
                <text x="799" y="809">4</text>
                <text transform="translate(1409 376) rotate(-90)">30</text>
                <text transform="translate(669 649) rotate(-90)">3</text>
                <text transform="translate(739 502) rotate(-64)">R6</text>
                <text transform="translate(1298 467) rotate(-40)">R10</text>
              </g>
              <g class="dots">
                <circle cx="754.500" cy="428.500" r="2.500"/><circle cx="830.500" cy="453" r="2.500"/><circle cx="1063" cy="453" r="2.500"/>
                <circle cx="442.500" cy="718.500" r="2.500"/><circle cx="743.500" cy="888" r="2.500"/><circle cx="1063" cy="888" r="2.500"/>
              </g>
              <g class="relations">
                <use href="#equal" x="494" y="446"/>
                <use href="#tangent" x="760" y="443"/>
                <use href="#tangent" x="830" y="439"/>
                <use href="#parallel" x="947" y="439"/>
                <use href="#horizontal" x="947" y="467"/>
                <use href="#tangent" x="1063" y="439"/>
                <use href="#tangent" x="436" y="732"/>
                <use href="#tangent" x="743" y="874"/>
                <use href="#parallel" x="903" y="874"/>
                <use href="#horizontal" x="903" y="902"/>
                <use href="#tangent" x="1063" y="902"/>
                <use href="#vertical" x="1077" y="670"/>
                <use href="#equal" x="1266" y="670"/>
                <text x="500" y="452">51</text>
                <text x="953" y="445">20</text>
                <text x="909" y="880">20</text>
                <text x="1272" y="676">51</text>
              </g>
              <g class="origin">
                <path d="M779.500 561V532M779 561.500H795M776 558l7 7M783 558l-7 7"/>
                <path d="M777 538l2.500-8 2.500 8zM788 559l8 2.500-8 2.500z" class="solid"/>
              </g>
              <path class="edge" d="M1324 20V1105H200"/>
              <g class="triad">
                <path d="M288 1074H305" stroke="#e84848" stroke-width="4"/>
                <path d="M304 1069l9 5-9 5z" fill="#b81414"/>
                <path d="M283 1078V1097" stroke="#4848d8" stroke-width="4"/>
                <path d="M278 1094h10l-5 10z" fill="#1a1aa0"/>
                <circle cx="283" cy="1074" r="5" fill="#0c4a1c"/>
                <text x="313" y="1078" fill="#e02040">X</text>
                <text x="278" y="1113" fill="#2020a0">Z</text>
              </g>
              <text class="view-name" x="254" y="1127">*Oben</text>
            </g>
          </svg>

          <div class="headsup">
            <button class="btn"><svg><use href="#zoomfit"/></svg></button>
            <button class="btn"><svg><use href="#zoomarea"/></svg></button>
            <button class="btn"><svg><use href="#brushback"/></svg></button>
            <button class="btn"><svg><use href="#section"/></svg></button>
            <button class="btn"><svg><use href="#vieworient"/></svg></button><button class="drop"></button>
            <button class="btn"><svg><use href="#v-shade"/></svg></button><button class="drop"></button>
            <button class="btn"><svg><use href="#glasses"/></svg></button><button class="drop"></button>
            <button class="btn"><svg><use href="#darkball"/></svg></button>
            <button class="btn"><svg><use href="#scene"/></svg></button><button class="drop"></button>
            <button class="btn"><svg><use href="#screen"/></svg></button><button class="drop"></button>
          </div>
          <div class="doc-buttons">
            <button class="btn" aria-label="Minimieren"><svg><use href="#min"/></svg></button>
            <button class="btn" aria-label="Wiederherstellen"><svg><use href="#restore"/></svg></button>
            <button class="btn" aria-label="Schließen"><svg><use href="#close"/></svg></button>
          </div>
          <button class="confirm" aria-label="Skizze beenden">
            <svg viewBox="0 0 32 38"><path d="M16 2H2v14c0 5 3 7 7 7h7" stroke="#7480c8" stroke-width="3"/><path d="M7 14l3-5 13-6 3 3-12 7z" fill="#d8cc90" stroke="#a09078"/><path d="M24 13c9 6 6 16-2 17v-5l-8 7 8 6v-4c13-2 15-15 5-21z" fill="#b890d0" stroke="#a078c0"/></svg>
          </button>
          <button class="cancel" aria-label="Abbrechen">
            <svg viewBox="0 0 24 24"><path d="M2 2l20 20M22 2L2 22" stroke="#b86a7c" stroke-width="5"/><path d="M2 2l20 20M22 2L2 22" stroke="#d8909c" stroke-width="3"/></svg>
          </button>
          <div class="tooltip">Linear austragen1</div>
        </div>
      </div>

      <div class="sheet-tabs">
        <button class="nav-btn" disabled aria-label="Anfang"><svg><use href="#n-first"/></svg></button>
        <button class="nav-btn" disabled aria-label="Zurück"><svg><use href="#n-prev"/></svg></button>
        <button class="nav-btn" disabled aria-label="Weiter"><svg><use href="#n-next"/></svg></button>
        <button class="nav-btn" disabled aria-label="Ende"><svg><use href="#n-last"/></svg></button>
        <button class="sheet active">Modell</button>
        <button class="sheet">Bewegungsstudie 1</button>
      </div>
    </section>

    <aside class="side side-right">
      <div class="vbar">
        <span class="split"><button class="btn"><svg><use href="#sketch"/></svg></button><button class="drop"></button></span>
        <span class="pair"><button class="btn"><svg><use href="#smartdim"/></svg></button><button class="drop"></button></span>
        <i class="vsep"></i>
        <span class="pair"><button class="btn"><svg><use href="#line"/></svg></button><button class="drop"></button></span>
        <span class="pair"><button class="btn"><svg><use href="#rect"/></svg></button><button class="drop"></button></span>
        <span class="pair"><button class="btn"><svg><use href="#slot"/></svg></button><button class="drop"></button></span>
        <span class="pair"><button class="btn"><svg><use href="#circle"/></svg></button><button class="drop"></button></span>
        <span class="pair"><button class="btn"><svg><use href="#arc"/></svg></button><button class="drop"></button></span>
        <span class="pair"><button class="btn"><svg><use href="#spline"/></svg></button><button class="drop"></button></span>
        <span class="pair"><button class="btn"><svg><use href="#ellipse"/></svg></button><button class="drop"></button></span>
        <span class="pair"><button class="btn"><svg><use href="#fillet"/></svg></button><button class="drop"></button></span>
        <button class="btn"><svg><use href="#polygon"/></svg></button>
        <button class="btn"><svg><use href="#star"/></svg></button>
        <button class="btn"><svg><use href="#skplane"/></svg></button>
        <button class="btn"><svg><use href="#text"/></svg></button>
        <i class="vsep"></i>
        <span class="pair"><button class="btn"><svg><use href="#trim"/></svg></button><button class="drop"></button></span>
        <span class="pair"><button class="btn"><svg><use href="#convert"/></svg></button><button class="drop"></button></span>
        <button class="btn"><svg><use href="#offset"/></svg></button>
        <button class="btn"><svg><use href="#mirror"/></svg></button>
        <span class="pair"><button class="btn"><svg><use href="#lpattern"/></svg></button><button class="drop"></button></span>
        <span class="pair"><button class="btn"><svg><use href="#move"/></svg></button><button class="drop"></button></span>
        <i class="vsep"></i>
        <span class="pair"><button class="btn"><svg><use href="#relations"/></svg></button><button class="drop"></button></span>
        <button class="btn"><svg><use href="#repair"/></svg></button>
        <i class="vsep"></i>
        <button class="btn" disabled><svg><use href="#quick"/></svg></button>
        <i class="vsep"></i>
        <button class="btn"><svg><use href="#rapid"/></svg></button>
      </div>
    </aside>
  </main>

  <footer class="status">
    <span class="product">SolidWorks Premium 2009</span>
    <span class="coord">-17.05mm</span>
    <span class="coord">11.71mm</span>
    <span class="coord-z">0mm</span>
    <span class="cell">Voll definiert</span>
    <span class="cell edge-left">Bearbeiten Skizze2</span>
    <span class="cell edge-left icon-cell"><svg><use href="#traffic"/></svg></span>
    <button class="btn help-btn" aria-label="Hilfe"><svg><use href="#qbox"/></svg></button>
    <button class="btn" aria-label="Tags"><svg><use href="#tag"/></svg></button>
  </footer>
</body>
</html>
```
FILE: styles.css
```css
* {
  box-sizing: border-box;
}

body {
  margin: 0;
  height: 100vh;
  display: flex;
  flex-direction: column;
  overflow: hidden;
  background: #e0e3ec;
  font-family: "DejaVu Sans Condensed", "DejaVu Sans", sans-serif;
  font-size: 11px;
  color: #000;
}

button {
  margin: 0;
  padding: 0;
  border: none;
  background: none;
  font: inherit;
  color: inherit;
}

svg {
  display: block;
  width: 16px;
  height: 16px;
  fill: none;
  stroke: currentColor;
}

svg text {
  stroke: none;
}

.sprite {
  position: absolute;
  width: 0;
  height: 0;
}

.annot-letter {
  font: bold 12px "Liberation Serif", serif;
  fill: #1c3080;
}

/* buttons shared by all toolbars */
.btn {
  flex: none;
  width: 23px;
  height: 23px;
  display: flex;
  align-items: center;
  justify-content: center;
  color: #333;
}

.btn:disabled {
  color: #9b9eab;
}

.btn.pressed {
  border: 1px solid #6f7490;
  border-radius: 4px;
  background: #b3b6d0;
}

.drop {
  flex: none;
  width: 13px;
  height: 23px;
  display: flex;
  align-items: center;
  justify-content: center;
}

.drop::before {
  content: "";
  border: 3px solid transparent;
  border-top-color: #333a55;
  border-bottom: none;
}

.split {
  flex: none;
  width: 37px;
  height: 23px;
  display: flex;
  border: 1px solid #777b92;
  border-radius: 4px;
  overflow: hidden;
}

.split .btn {
  height: 21px;
  background: #b3b6d0;
  border-right: 1px solid #8c90a6;
}

.split .drop {
  width: 12px;
  height: 21px;
}

.pair {
  display: flex;
}

/* title bar */
.titlebar {
  flex: none;
  height: 30px;
  display: flex;
  align-items: center;
  border-bottom: 1px solid #0c0c14;
  background: linear-gradient(#eceef8, #dcdeec 40%, #b6b9cd);
}

.menu-area {
  flex: none;
  width: 911px;
  height: 29px;
  display: flex;
  align-items: center;
  border-right: 2px solid #7c8098;
  background: linear-gradient(#e6e8f4, #d4d6e4 45%, #b8bacb 60%, #c6c8d8);
}

.brand {
  width: 135px;
  height: 29px;
  padding-left: 3px;
  display: flex;
  align-items: center;
  gap: 2px;
  border-right: 9px solid #8488a6;
}

.cube {
  width: 22px;
  height: 24px;
  stroke: none;
}

.cube-letter {
  font: bold 9px "Liberation Sans", sans-serif;
  fill: #fff;
}

.brand-name {
  font-family: "Open Sans", sans-serif;
  font-size: 17px;
  color: #3a3c44;
}

.brand-name b {
  color: #1a1b20;
}

.menu {
  flex: 1;
  display: flex;
  justify-content: space-between;
  padding: 2px 10px 0 8px;
  white-space: nowrap;
}

.menu a {
  color: #3b3b68;
  text-decoration: none;
  line-height: 20px;
}

.standard,
.window-buttons {
  flex: none;
  display: flex;
  align-items: center;
}

.standard {
  padding-left: 2px;
}

.doc-title {
  flex: 1;
  padding-top: 2px;
  text-align: center;
  color: #26263c;
}

.window-buttons {
  padding-right: 4px;
}

/* toolbar row */
.toolbars {
  flex: none;
  height: 29px;
  display: flex;
  background: linear-gradient(#f2f4fd, #dfe2f0 50%, #bdc1d4);
}

.bar {
  flex: none;
  display: flex;
  align-items: center;
  padding: 1px 6px 0 0;
  border-right: 1px solid #fff;
}

.bar:first-child {
  padding-left: 1px;
}

.bar::before {
  content: "";
  width: 3px;
  height: 22px;
  margin: 0 7px 0 4px;
  background: radial-gradient(circle, #8a8ea6 1px, transparent 1px) 0 0 / 3px 4px;
}

.sep {
  flex: none;
  width: 1px;
  height: 19px;
  margin: 0 4px 0 3px;
  background: #b4b8ca;
}

/* workspace */
.workspace {
  flex: 1;
  min-height: 0;
  display: flex;
}

.side {
  flex: none;
  background: linear-gradient(90deg, #ccd0e4, #b8bed2);
}

.side-left {
  width: 42px;
  border-left: 1px solid #f4f5fb;
}

.side-right {
  width: 43px;
  background: linear-gradient(#d2d5e8 55%, #c5cadd 70%, #b8bdd0);
}

.vbar {
  display: flex;
  flex-direction: column;
  padding: 0 0 6px 3px;
  border-bottom: 1px solid #fff;
  background: linear-gradient(90deg, #e8ebf8, #dadeee 50%, #b3b9d0);
}

.side-right .vbar {
  padding-left: 2px;
  background: linear-gradient(90deg, #f4f5fd, #e2e5f3 50%, #b9bfd4);
}

.vbar::before {
  content: "";
  width: 34px;
  height: 3px;
  margin: 6px 0 5px;
  background: radial-gradient(circle, #8a8ea6 1px, transparent 1px) 0 0 / 4px 3px;
}

.vsep {
  height: 1px;
  margin: 3px 6px 4px 2px;
  background: #bfc2cc;
}

.vbar .drop {
  width: 11px;
}

.center {
  flex: 1;
  min-width: 0;
  display: flex;
  flex-direction: column;
}

.split-view {
  flex: 1;
  min-height: 0;
  display: flex;
  border-bottom: 1px solid #000;
}

/* feature tree */
.panel {
  position: relative;
  flex: none;
  width: 201px;
  padding-top: 2px;
  border-right: 2px solid #555970;
  border-bottom: 2px solid #9a9eb0;
  background: #e0e3ec;
}

.panel-tabs {
  height: 27px;
  padding-top: 4px;
  display: flex;
  border-top: 1px solid #6c7088;
  border-bottom: 1px solid #6c7088;
  background: #cfd2e6;
}

.tab {
  width: 27px;
  height: 21px;
  margin-right: 1px;
  display: flex;
  align-items: center;
  justify-content: center;
  border: 1px solid #8489a0;
  border-bottom: none;
  border-radius: 3px 3px 0 0;
  background: #b4b8cf;
}

.tab.active {
  height: 22px;
  border-color: #f4f5fa;
  background: #e4e6ef;
}

.more {
  width: 16px;
  margin: 0 2px 0 auto;
}

.filter {
  height: 18px;
  margin: 1px 1px 3px;
  padding-left: 4px;
  display: flex;
  align-items: center;
  border: 1px solid #84889c;
  border-radius: 9px;
  background: linear-gradient(#dcdfe9, #fff 50%);
}

.filter input {
  flex: 1;
  min-width: 0;
  height: 14px;
  border: none;
  outline: none;
  background: none;
  font: inherit;
}

.tree {
  border-bottom: 2px solid #9a9eb0;
}

.tree ul {
  margin: 0;
  padding: 0;
  list-style: none;
}

.tree li {
  position: relative;
  padding-left: 20px;
}

.tree li::before {
  content: "";
  position: absolute;
  left: 10px;
  top: 0;
  bottom: 0;
  border-left: 1px dotted #9a9ca6;
}

.tree li:last-child::before {
  bottom: auto;
  height: 9px;
}

.tree li::after {
  content: "";
  position: absolute;
  left: 10px;
  top: 9px;
  width: 9px;
  border-top: 1px dotted #9a9ca6;
}

.row {
  height: 18px;
  display: flex;
  align-items: center;
  gap: 4px;
  padding-left: 1px;
  white-space: nowrap;
}

.row.muted {
  color: #8e9099;
}

.expander {
  position: absolute;
  z-index: 1;
  left: 6px;
  top: 5px;
  width: 9px;
  height: 9px;
  border: 1px solid #7f9db9;
  background: #fff;
  font-size: 9px;
  line-height: 7px;
  text-align: center;
}

.handle {
  position: absolute;
  z-index: 2;
  left: 199px;
  top: 523px;
  width: 9px;
  height: 27px;
  display: flex;
  flex-direction: column;
  align-items: center;
  justify-content: space-evenly;
  border-right: 1px solid #555970;
  border-bottom: 1px solid #555970;
  border-radius: 0 3px 3px 0;
  background: #e4e6f0;
}

.handle i {
  border: 3px solid transparent;
  border-right-color: #3c4056;
  border-left: none;
}

/* graphics area */
.viewport {
  position: relative;
  flex: 1;
  min-width: 0;
  overflow: hidden;
  background: linear-gradient(#a8aebe, #acb1c1 25%, #b6bbc9 47%, #c6c9d5 57%, #d2d5dd 62%, #e2e4e8 69%, #eceef0 75%, #f5f5f6 82%, #fafafa 88%);
}

.drawing {
  position: absolute;
  left: 0;
  top: 0;
  width: 100%;
  height: 100%;
  stroke: #000;
}

.face {
  fill: #a0a4b8;
  stroke: none;
}

.region {
  fill: #b5b78f;
  stroke-width: 2;
}

.centerline {
  stroke: #1c1c10;
  stroke-dasharray: 22 5 4 5;
}

.edge {
  stroke: #dd8840;
  stroke-width: 2;
}

.dim-text text {
  font: 18px Lato, sans-serif;
  text-anchor: middle;
  fill: #000;
}

.dots circle {
  fill: #111;
  stroke: none;
}

.rel {
  fill: #0cc840;
  stroke: none;
}

.relations text {
  font: bold 11px Lato, sans-serif;
  fill: #000;
}

.origin {
  stroke: #f01414;
}

.solid {
  fill: #f01414;
  stroke: none;
}

.triad {
  stroke: none;
}

.triad text {
  font: 10px "DejaVu Sans Condensed", sans-serif;
}

.view-name {
  font: 14px "DejaVu Sans", sans-serif;
  fill: #26264a;
}

.headsup {
  position: absolute;
  left: 0;
  right: 0;
  top: 3px;
  display: flex;
  justify-content: center;
  padding-right: 6px;
}

.headsup .drop {
  width: 10px;
}

.doc-buttons {
  position: absolute;
  top: 3px;
  right: 5px;
  display: flex;
}

.confirm {
  position: absolute;
  top: 30px;
  right: 44px;
  opacity: 0.5;
}

.confirm svg {
  width: 32px;
  height: 38px;
}

.cancel {
  position: absolute;
  top: 63px;
  right: 12px;
  opacity: 0.7;
}

.cancel svg {
  width: 24px;
  height: 24px;
}

.tooltip {
  position: absolute;
  left: 166px;
  top: 280px;
  padding: 0 1px;
  border: 1px solid #000;
  background: #e4e6ef;
  box-shadow: 2px 2px 2px rgba(40, 42, 60, 0.7);
  line-height: 15px;
  color: #33335c;
  white-space: nowrap;
}

/* bottom tabs */
.sheet-tabs {
  flex: none;
  height: 14px;
  padding-left: 2px;
  display: flex;
  font-family: "Liberation Sans", Arial, sans-serif;
  font-size: 12px;
}

.nav-btn {
  width: 16px;
  height: 14px;
  border: 1px solid #8b8fa2;
  background: #b9bccb;
  color: #8b8fa2;
}

.nav-btn svg {
  width: 14px;
  height: 12px;
}

.sheet {
  padding: 0 12px 0 8px;
  border: 1px solid #4c5068;
  border-top: none;
  background: #bcc0d2;
  line-height: 11px;
  color: #16162c;
}

.sheet.active {
  margin-left: 1px;
  padding: 0 8px 0 11px;
  background: #dfe2ec;
  font-weight: bold;
}

/* status bar */
.status {
  flex: none;
  height: 23px;
  padding: 0 12px 3px 2px;
  display: flex;
  align-items: center;
  border-top: 1px solid #4c5068;
  background: linear-gradient(#d2d4e4, #c0c3d6 50%, #a6aabc);
  white-space: nowrap;
}

.product {
  flex: 1;
}

.coord {
  width: 73px;
}

.coord + .coord {
  width: 58px;
}

.coord-z {
  width: 43px;
}

.cell {
  padding: 0 3px;
  border-right: 1px solid #f4f5fb;
}

.cell.edge-left {
  margin-left: 8px;
  border-left: 1px solid #f4f5fb;
}

.icon-cell {
  padding: 0 1px;
}

.help-btn {
  margin: 0 42px 0 6px;
}
```
